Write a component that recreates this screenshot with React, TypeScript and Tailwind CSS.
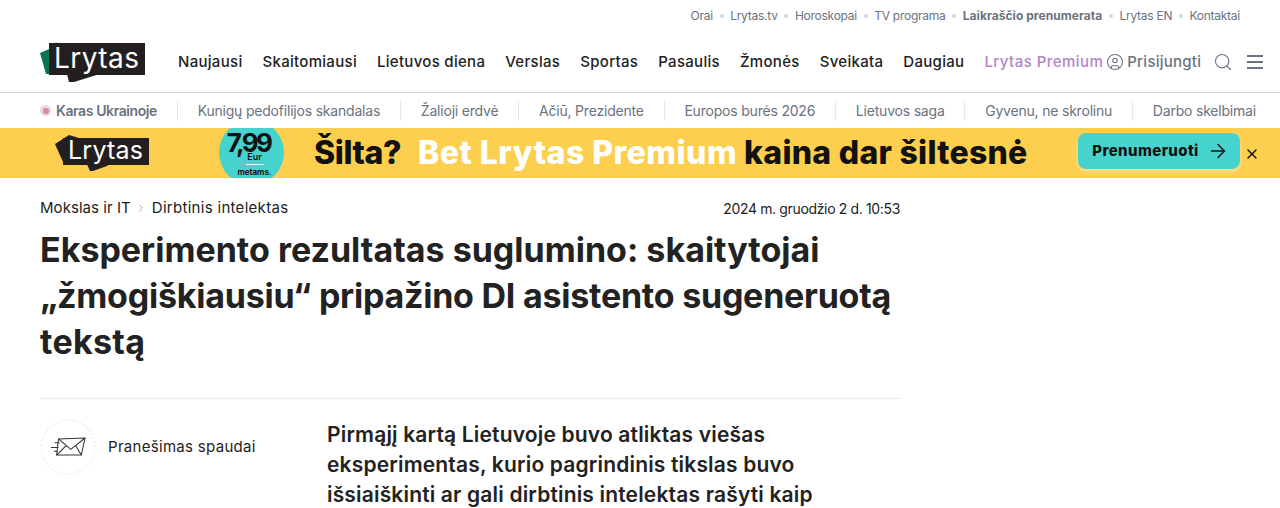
import React from "react";
import { ArrowRight, ChevronRight, X, Search, CircleUser } from "lucide-react";

const topLinks = ["Orai", "Lrytas.tv", "Horoskopai", "TV programa", "Laikraščio prenumerata", "Lrytas EN", "Kontaktai"];
const navLinks = ["Naujausi", "Skaitomiausi", "Lietuvos diena", "Verslas", "Sportas", "Pasaulis", "Žmonės", "Sveikata", "Daugiau"];
const topics = ["Kunigų pedofilijos skandalas", "Žalioji erdvė", "Ačiū, Prezidente", "Europos burės 2026", "Lietuvos saga", "Gyvenu, ne skrolinu", "Darbo skelbimai"];

const Logo = () => (
  <svg width="106" height="44" viewBox="0 0 106 44">
    <polygon points="15,2 26,4 15,10" fill="#b5cdf5" />
    <polygon points="0,13 16,6 16,34 6,34" fill="#0b7350" />
    <polygon points="26,30 62,30 63,33 34,42 29,42" fill="#231f20" />
    <rect x="9" y="3" width="96" height="32" fill="#231f20" />
    <text x="14" y="28" fill="#fff" fontFamily="Inter, sans-serif" fontSize="28" textLength="85">Lrytas</text>
  </svg>
);

const BannerLogo = () => (
  <svg width="94" height="38" viewBox="0 0 94 38">
    <polygon points="0,10 14,1 24,4 24,28 8,28" fill="#231f20" />
    <polygon points="30,26 60,26 52,32 38,37 35,37" fill="#231f20" />
    <rect x="8" y="4" width="86" height="27" fill="#231f20" />
    <text x="13" y="25" fill="#fff" fontFamily="Inter, sans-serif" fontSize="25" textLength="75">Lrytas</text>
  </svg>
);

const MailIcon = () => (
  <svg width="36" height="20" viewBox="0 0 38 21" fill="none" stroke="#333" strokeWidth="1.1">
    <polygon points="9,2 37,1 33,19 7,19" fill="#fff" />
    <path d="M9 2 L22 13 L37 1 M7 19 L17 9 M33 19 L27 9" />
    <path d="M5 6 H10 M1 11 H9 M4 15 H8" />
  </svg>
);

export default function App() {
  return (
    <div className="w-[1280px] h-[508px] overflow-hidden bg-white font-['Inter',sans-serif] text-[#222]">
      <div className="h-[32px] pr-[40px] flex items-center justify-end text-[12px] tracking-[-0.25px] text-[#6b7280]">
        {topLinks.map((link, i) => (
          <React.Fragment key={link}>
            {i > 0 && <span className="w-[4px] h-[4px] mx-[6.6px] rounded-full bg-[#d3dae0]" />}
            <span className={link.startsWith("Laik") ? "font-bold tracking-[0.05px]" : ""}>{link}</span>
          </React.Fragment>
        ))}
      </div>

      <div className="h-[61px] pl-[40px] pr-[16px] flex items-center border-b border-[#d0d5da]">
        <div className="w-[138px] -mt-[1px]"><Logo /></div>
        <nav className="flex gap-[20px] text-[15px] font-medium tracking-[0.3px]">
          {navLinks.map((link) => <span key={link}>{link}</span>)}
        </nav>
        <span className="ml-[20px] text-[15px] font-medium tracking-[0.45px] text-[#b583c7]">Lrytas Premium</span>
        <div className="ml-[3px] flex items-center gap-[3px] text-[#6b7280] text-[15px] font-medium tracking-[0.25px]">
          <CircleUser size={18} strokeWidth={1.4} />
          <span>Prisijungti</span>
        </div>
        <Search size={20} strokeWidth={1.4} className="ml-[12px] text-[#6b7280]" />
        <div className="ml-[14px] flex flex-col gap-[4px]">
          <span className="w-[16px] h-[2px] bg-[#6b7280]" />
          <span className="w-[16px] h-[2px] bg-[#6b7280]" />
          <span className="w-[16px] h-[2px] bg-[#6b7280]" />
        </div>
      </div>

      <div className="h-[35px] pl-[40px] pr-[24px] flex items-center justify-between text-[14px] tracking-[-0.2px] text-[#6b7280]">
        <div className="flex items-center gap-[5px] font-semibold tracking-[-0.4px]">
          <span className="w-[11px] h-[11px] rounded-full bg-[#eed4dd] flex items-center justify-center">
            <span className="w-[6px] h-[6px] rounded-full bg-[#d48aa5]" />
          </span>
          Karas Ukrainoje
        </div>
        {topics.map((topic) => (
          <React.Fragment key={topic}>
            <span className="w-px h-[20px] bg-[#e5e7eb]" />
            <span>{topic}</span>
          </React.Fragment>
        ))}
      </div>

      <div className="h-[50px] bg-[#fdcf4f] flex items-center overflow-hidden relative">
        <div className="ml-[55px] w-[164px]"><BannerLogo /></div>
        <div className="w-[65px] h-[65px] -mt-[2px] shrink-0 rounded-full bg-[#47d3cd] flex flex-col items-center text-[#111]">
          <span className="text-[26px] leading-[18px] font-bold tracking-[-2.6px] mt-[14px] -ml-[6px]">7,99</span>
          <span className="text-[9px] leading-[8px] font-semibold mt-[1px] ml-[6px]">Eur</span>
          <span className="w-[18px] h-px bg-white mt-[3px] ml-[6px]" />
          <span className="text-[8px] leading-[8px] font-bold mt-[3px] ml-[6px]">metams.</span>
        </div>
        <div className="ml-[30px] text-[32px] font-extrabold text-[#111] whitespace-nowrap flex">
          <span className="tracking-[-0.4px]">Šilta?</span>
          <span className="ml-[17px] text-white tracking-[0.5px]">Bet Lrytas Premium</span>
          <span className="ml-[7px] tracking-[0.27px]">kaina dar šiltesnė</span>
        </div>
        <div className="absolute left-[1078px] top-[5px] w-[162px] h-[36px] pl-[3px] rounded-[8px] bg-[#47d3cd] flex items-center justify-center gap-[8px] text-[15px] font-extrabold tracking-[0.4px] text-[#111] shadow-[0_2px_4px_rgba(255,255,255,0.5)]">
          Prenumeruoti <ArrowRight size={22} strokeWidth={1.6} />
        </div>
        <X size={16} strokeWidth={2} className="absolute left-[1244px] top-[18px] text-[#111]" />
      </div>

      <div className="px-[40px] w-[940px]">
        <div className="pt-[19px] h-[50px] flex justify-between items-start">
          <div className="flex items-center text-[15px] text-[#222]">
            <span className="tracking-[0.05px]">Mokslas ir IT</span>
            <ChevronRight size={12} strokeWidth={1.5} className="mx-[4.5px] text-[#888]" />
            <span className="tracking-[0.3px]">Dirbtinis intelektas</span>
          </div>
          <span className="text-[14px] tracking-[-0.35px] pt-[1px]">2024 m. gruodžio 2 d. 10:53</span>
        </div>
        <h1 className="text-[34px] leading-[46px] font-bold -mt-[1px] text-[#222]">
          <span className="block tracking-[0px]">Eksperimento rezultatas suglumino: skaitytojai</span>
          <span className="block tracking-[-0.24px]">„žmogiškiausiu“ pripažino DI asistento sugeneruotą</span>
          <span className="block tracking-[0.3px]">tekstą</span>
        </h1>
        <div className="mt-[33px] border-t border-[#e8eaec] pt-[20px] flex">
          <div className="w-[287px] flex items-center self-start">
            <div className="w-[56px] h-[56px] rounded-full border-2 border-dotted border-[#eef1f7] flex items-center justify-center">
              <MailIcon />
            </div>
            <span className="ml-[12px] text-[15px] tracking-[0.3px]">Pranešimas spaudai</span>
          </div>
          <p className="w-[500px] text-[21px] leading-[30px] font-semibold tracking-[0.17px] text-[#222] pt-px">
            Pirmąjį kartą Lietuvoje buvo atliktas viešas eksperimentas, kurio pagrindinis tikslas buvo išsiaiškinti ar gali dirbtinis intelektas rašyti kaip
          </p>
        </div>
      </div>
    </div>
  );
}
